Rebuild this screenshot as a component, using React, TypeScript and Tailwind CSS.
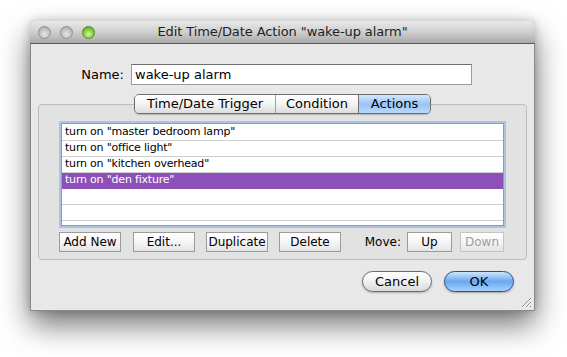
import React from "react";

const font = { fontFamily: '"DejaVu Sans", "Lucida Grande", sans-serif' };

type Light = "gray" | "green";

const TrafficLight = ({ kind }: { kind: Light }) => (
  <span
    className={`block w-[13px] h-[13px] rounded-full border ${
      kind === "green"
        ? "border-[#4d8a20] bg-[radial-gradient(circle_at_50%_65%,#d6f7a0_0%,#8fd14a_45%,#4f9a18_100%)]"
        : "border-[#8f8f8f] bg-[radial-gradient(circle_at_50%_65%,#e6e6e6_0%,#c4c4c4_50%,#9d9d9d_100%)]"
    }`}
  />
);

const rows = [
  'turn on "master bedroom lamp"',
  'turn on "office light"',
  'turn on "kitchen overhead"',
  'turn on "den fixture"',
  "",
  "",
];

const SmallButton = ({
  label,
  width,
  disabled,
}: {
  label: string;
  width: string;
  disabled?: boolean;
}) => (
  <div
    className={`${width} h-[20px] flex items-center justify-center border text-[12px] leading-none bg-gradient-to-b from-white via-[#f6f6f6] to-[#e3e3e3] ${
      disabled
        ? "border-[#c4c4c4] text-[#9c9c9c]"
        : "border-[#9b9b9b] text-black"
    }`}
  >
    {label}
  </div>
);

export default function App() {
  return (
    <div
      className="w-[567px] h-[357px] bg-white overflow-hidden pt-[21px] pl-[30px]"
      style={font}
    >
      <div className="relative w-[505px] h-[290px] bg-[#e8e8e8] rounded-t-[5px] shadow-[0_14px_30px_rgba(0,0,0,0.55),0_0_10px_rgba(0,0,0,0.2)] border-x border-b border-[#8a8a8a] flex flex-col">
        {/* Title bar */}
        <div className="h-[23px] flex items-center rounded-t-[5px] bg-gradient-to-b from-[#e9e9e9] via-[#cfcfcf] to-[#a9a9a9] border-b border-[#5c5c5c] -mx-px">
          <div className="w-[70px] flex items-center gap-[9px] pl-[8px]">
            <TrafficLight kind="gray" />
            <TrafficLight kind="gray" />
            <TrafficLight kind="green" />
          </div>
          <div className="flex-1 text-center text-[13px] tracking-[-0.1px] text-[#1e1e1e]">
            Edit Time/Date Action "wake-up alarm"
          </div>
          <div className="w-[70px]" />
        </div>

        {/* Name */}
        <div className="flex items-center mt-[20px] h-[21px]">
          <div className="w-[100px] text-right text-[13px] text-black pr-[7px]">
            Name:
          </div>
          <div className="w-[341px] h-[21px] bg-white border border-[#9c9c9c] border-t-[#6f6f6f] flex items-center pl-[3px] text-[13px] text-black">
            wake-up alarm
          </div>
        </div>

        {/* Tab view */}
        <div className="mx-[7px] mt-[9px]">
          <div className="relative z-10 flex justify-center -mb-[10px]">
            <div className="flex h-[20px] rounded-[5px] border border-[#6e6e6e] overflow-hidden shadow-[0_1px_1px_rgba(0,0,0,0.2)] text-[13px]">
              <div className="w-[141px] flex items-center justify-center bg-gradient-to-b from-white via-[#f3f3f3] to-[#dcdcdc] border-r border-[#a0a0a0] text-black">
                Time/Date Trigger
              </div>
              <div className="w-[83px] flex items-center justify-center bg-gradient-to-b from-white via-[#f3f3f3] to-[#dcdcdc] border-r border-[#6e6e6e] text-black">
                Condition
              </div>
              <div className="w-[71px] flex items-center justify-center bg-gradient-to-b from-[#d6e8fc] via-[#9ac4f5] to-[#b7d8fb] text-black">
                Actions
              </div>
            </div>
          </div>
          <div className="h-[156px] rounded-[4px] border border-[#bdbdbd] bg-[#e2e2e2] pt-[18px] px-[22px]">
            {/* List */}
            <div className="h-[103px] bg-white border border-[#7d9fcf] shadow-[0_0_0_2px_rgba(125,170,230,0.55)] overflow-hidden pt-[1px]">
              {rows.map((r, i) => (
                <div
                  key={i}
                  className={`h-[16px] flex items-center pl-[3px] text-[11px] tracking-[-0.2px] border-b ${
                    i === 3
                      ? "bg-[#8d50b8] text-white border-[#8d50b8]"
                      : "text-black border-[#cfcfcf]"
                  } ${i === 2 ? "border-[#8d50b8]" : ""}`}
                >
                  {r}
                </div>
              ))}
            </div>

            {/* Buttons */}
            <div className="flex items-center mt-[6px] -ml-[2px] w-[445px]">
              <SmallButton label="Add New" width="w-[62px]" />
              <div className="w-[12px]" />
              <SmallButton label="Edit..." width="w-[62px]" />
              <div className="w-[11px]" />
              <SmallButton label="Duplicate" width="w-[62px]" />
              <div className="w-[11px]" />
              <SmallButton label="Delete" width="w-[62px]" />
              <div className="flex-1 text-right pr-[6px] text-[12px] text-black">
                Move:
              </div>
              <SmallButton label="Up" width="w-[45px]" />
              <div className="w-[8px]" />
              <SmallButton label="Down" width="w-[44px]" disabled />
            </div>
          </div>
        </div>

        {/* Dialog buttons */}
        <div className="flex justify-end gap-[12px] mt-[11px] pr-[20px]">
          <div className="w-[70px] h-[21px] rounded-full border border-[#6a6a6a] bg-gradient-to-b from-white via-[#f1f1f1] to-[#d9d9d9] shadow-[0_1px_2px_rgba(0,0,0,0.25)] flex items-center justify-center text-[13px] text-black">
            Cancel
          </div>
          <div className="w-[70px] h-[21px] rounded-full border border-[#2d4f8f] bg-gradient-to-b from-[#cfe4fb] via-[#6aa8ee] to-[#a6d0fb] shadow-[0_1px_2px_rgba(0,0,0,0.3)] flex items-center justify-center text-[13px] text-black">
            OK
          </div>
        </div>

        {/* Resize grip */}
        <svg
          className="absolute right-[2px] bottom-[2px]"
          width="12"
          height="12"
          viewBox="0 0 12 12"
        >
          <path d="M11 2 L2 11 M11 6 L6 11 M11 10 L10 11" stroke="#8a8a8a" strokeWidth="1" />
          <path d="M11 3 L3 11 M11 7 L7 11" stroke="#ffffff" strokeWidth="1" />
        </svg>
      </div>
    </div>
  );
}
